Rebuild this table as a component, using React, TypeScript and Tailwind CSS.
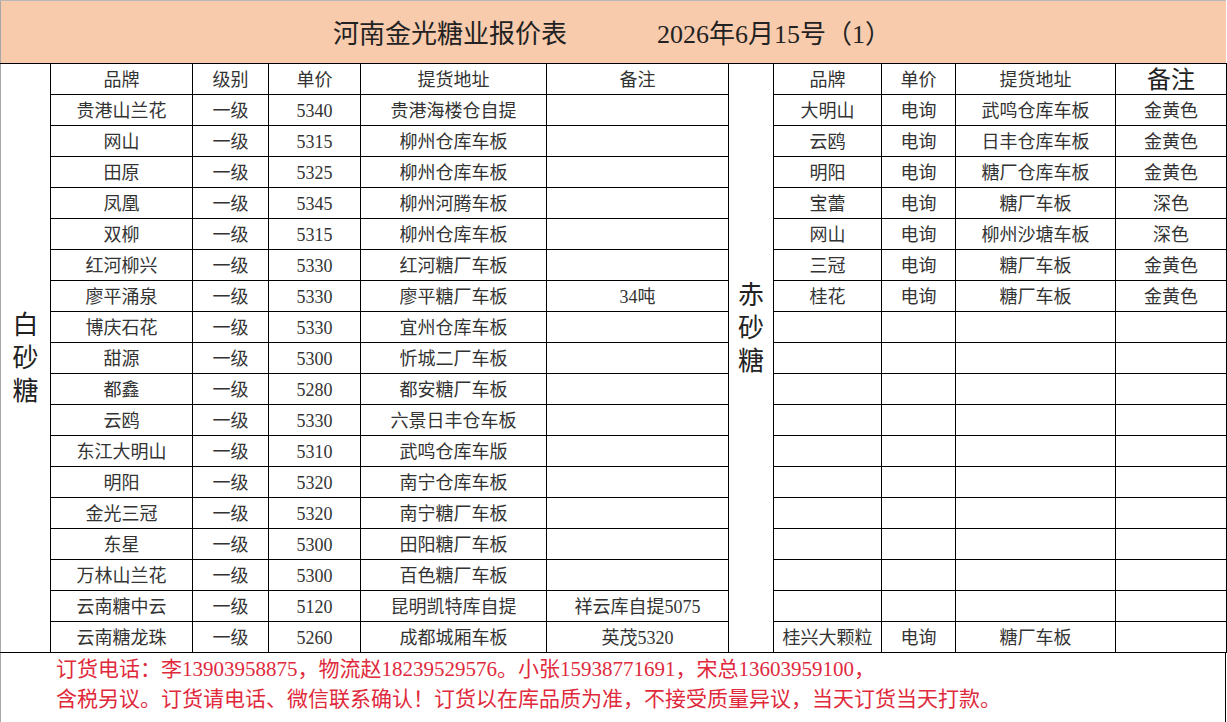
const white: [string, string, string, string][] = [
  ['贵港山兰花', '5340', '贵港海楼仓自提', ''],
  ['网山', '5315', '柳州仓库车板', ''],
  ['田原', '5325', '柳州仓库车板', ''],
  ['凤凰', '5345', '柳州河腾车板', ''],
  ['双柳', '5315', '柳州仓库车板', ''],
  ['红河柳兴', '5330', '红河糖厂车板', ''],
  ['廖平涌泉', '5330', '廖平糖厂车板', '34吨'],
  ['博庆石花', '5330', '宜州仓库车板', ''],
  ['甜源', '5300', '忻城二厂车板', ''],
  ['都鑫', '5280', '都安糖厂车板', ''],
  ['云鸥', '5330', '六景日丰仓车板', ''],
  ['东江大明山', '5310', '武鸣仓库车版', ''],
  ['明阳', '5320', '南宁仓库车板', ''],
  ['金光三冠', '5320', '南宁糖厂车板', ''],
  ['东星', '5300', '田阳糖厂车板', ''],
  ['万林山兰花', '5300', '百色糖厂车板', ''],
  ['云南糖中云', '5120', '昆明凯特库自提', '祥云库自提5075'],
  ['云南糖龙珠', '5260', '成都城厢车板', '英茂5320'],
]

const brown: [string, string, string, string][] = [
  ['大明山', '电询', '武鸣仓库车板', '金黄色'],
  ['云鸥', '电询', '日丰仓库车板', '金黄色'],
  ['明阳', '电询', '糖厂仓库车板', '金黄色'],
  ['宝蕾', '电询', '糖厂车板', '深色'],
  ['网山', '电询', '柳州沙塘车板', '深色'],
  ['三冠', '电询', '糖厂车板', '金黄色'],
  ['桂花', '电询', '糖厂车板', '金黄色'],
  ['', '', '', ''],
  ['', '', '', ''],
  ['', '', '', ''],
  ['', '', '', ''],
  ['', '', '', ''],
  ['', '', '', ''],
  ['', '', '', ''],
  ['', '', '', ''],
  ['', '', '', ''],
  ['', '', '', ''],
  ['桂兴大颗粒', '电询', '糖厂车板', ''],
]

const td = 'h-[31px] p-0 pt-[2px] border border-black text-center align-middle whitespace-nowrap'

function Vertical({ text }: { text: string }) {
  return (
    <div className="flex flex-col items-center text-[26px] leading-[33px] text-[#222]">
      {text.split('').map((c) => (
        <span key={c}>{c}</span>
      ))}
    </div>
  )
}

export default function App() {
  return (
    <div className="w-[1227px] h-[722px] overflow-hidden bg-white font-['Liberation_Serif','Noto_Sans_CJK_SC',serif] text-[#333]">
      {/* sheet gridline strip above the merged title */}
      <div className="flex h-[1px] w-[1226px] bg-[#b8b8b8]" />

      <div className="flex h-[62px] w-[1226px] items-center gap-[90px] border-l border-[#a8a8a8] bg-[#f8cbad] pl-[332px] pt-[4px] text-[26px] text-[#222]">
        <span>河南金光糖业报价表</span>
        <span>2026年6月15号（1）</span>
      </div>

      <table className="w-[1226px] table-fixed border-collapse text-[18px]">
        <colgroup>
          <col className="w-[50px]" />
          <col className="w-[142px]" />
          <col className="w-[76px]" />
          <col className="w-[92px]" />
          <col className="w-[186px]" />
          <col className="w-[182px]" />
          <col className="w-[45px]" />
          <col className="w-[108px]" />
          <col className="w-[74px]" />
          <col className="w-[160px]" />
          <col className="w-[111px]" />
        </colgroup>
        <tbody>
          <tr>
            <td rowSpan={19} className="p-0 border border-black border-l-[#a8a8a8] align-middle">
              <Vertical text="白砂糖" />
            </td>
            <td className={td}>品牌</td>
            <td className={td}>级别</td>
            <td className={td}>单价</td>
            <td className={td}>提货地址</td>
            <td className={td}>备注</td>
            <td rowSpan={19} className="p-0 pb-[60px] border border-black align-middle">
              <Vertical text="赤砂糖" />
            </td>
            <td className={td}>品牌</td>
            <td className={td}>单价</td>
            <td className={td}>提货地址</td>
            <td className={`${td} text-[24px] leading-none text-[#222]`}>备注</td>
          </tr>
          {white.map((w, i) => (
            <tr key={i}>
              <td className={td}>{w[0]}</td>
              <td className={td}>一级</td>
              <td className={td}>{w[1]}</td>
              <td className={td}>{w[2]}</td>
              <td className={td}>{w[3]}</td>
              <td className={td}>{brown[i][0]}</td>
              <td className={td}>{brown[i][1]}</td>
              <td className={td}>{brown[i][2]}</td>
              <td className={td}>{brown[i][3]}</td>
            </tr>
          ))}
        </tbody>
      </table>

      <div className="h-[70px] w-[1226px] border-l border-r border-l-[#a8a8a8] border-r-black pl-[55px] pt-[1px] text-[21px] leading-[30px] text-[#e02a3c]">
        <p>订货电话：李13903958875，物流赵18239529576。小张15938771691，宋总13603959100，</p>
        <p>含税另议。订货请电话、微信联系确认！订货以在库品质为准，不接受质量异议，当天订货当天打款。</p>
      </div>
    </div>
  )
}
